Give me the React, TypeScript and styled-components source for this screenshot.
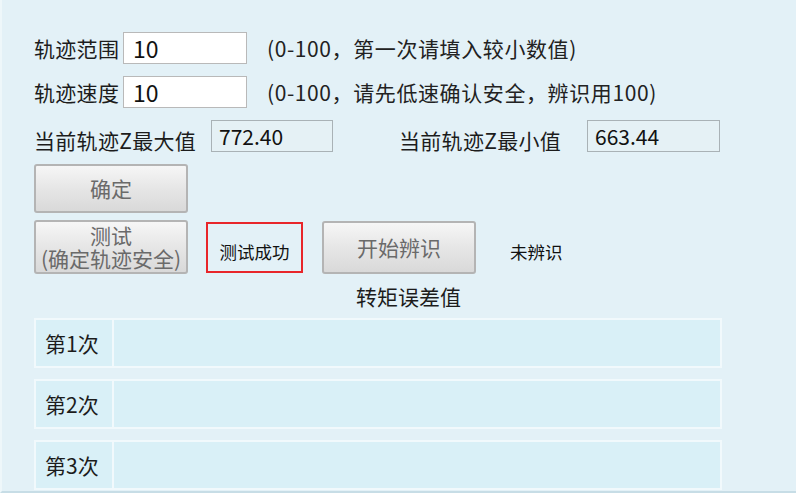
import { createGlobalStyle } from "styled-components";
import styled from "styled-components";

const GlobalStyle = createGlobalStyle`
  html, body {
    margin: 0;
    padding: 0;
    background: #e3f1f7;
  }
  * {
    box-sizing: border-box;
  }
`;

const FONT = `"Noto Sans CJK SC", "Noto Sans", "Liberation Sans", sans-serif`;

const Page = styled.div`
  width: 796px;
  height: 493px;
  background: #e3f1f7;
  border-left: 2px solid #eef7fa;
  border-bottom: 2px solid #c7dde6;
  padding: 32px 0 0 32px;
  font-family: ${FONT};
  color: #1c1c1c;
  display: flex;
  flex-direction: column;
`;

const Row = styled.div<{ top?: number; height?: number }>`
  display: flex;
  align-items: center;
  margin-top: ${({ top }) => top ?? 0}px;
  height: ${({ height }) => height ?? 32}px;
`;

const Label = styled.div<{ width?: number; size?: number; gap?: number; drop?: number }>`
  width: ${({ width }) => (width ? `${width}px` : "auto")};
  margin-left: ${({ gap }) => gap ?? 0}px;
  padding-top: ${({ drop }) => drop ?? 0}px;
  flex: 0 0 auto;
  font-size: ${({ size }) => size ?? 21}px;
  line-height: 1;
  white-space: nowrap;
  letter-spacing: 0.3px;
`;

const Input = styled.div<{ width?: number }>`
  width: ${({ width }) => width ?? 124}px;
  height: 32px;
  background: #ffffff;
  border: 1px solid #b9b9b9;
  padding-left: 9px;
  font-size: 23px;
  display: flex;
  align-items: center;
  color: #111;
`;

const Note = styled.div`
  margin-left: 20px;
  font-size: 21px;
  line-height: 1;
  white-space: nowrap;
  letter-spacing: 0.6px;
  color: #222;
`;

const ReadBox = styled.div<{ width: number }>`
  width: ${({ width }) => width}px;
  height: 32px;
  border: 1px solid #a9b2b6;
  background: #e5f1f5;
  padding-left: 7px;
  font-size: 21px;
  display: flex;
  align-items: center;
  color: #111;
`;

const Button = styled.button<{ width?: number; height?: number; gap?: number }>`
  width: ${({ width }) => width ?? 154}px;
  height: ${({ height }) => height ?? 49}px;
  margin-left: ${({ gap }) => gap ?? 0}px;
  flex: 0 0 auto;
  border: 2px solid #b4b4b4;
  border-radius: 3px;
  background: linear-gradient(#f6f6f6, #e6e6e6 50%, #d9d9d9);
  font-family: ${FONT};
  font-size: 21px;
  line-height: 23px;
  color: #6a6a6a;
  padding: 0;
  white-space: nowrap;
  display: flex;
  flex-direction: column;
  align-items: center;
  justify-content: center;
`;

const StatusBox = styled.div`
  width: 97px;
  height: 51px;
  margin-left: 18px;
  flex: 0 0 auto;
  border: 2px solid #e8262a;
  font-size: 17.5px;
  display: flex;
  align-items: center;
  justify-content: center;
  padding-top: 8px;
  color: #111;
  white-space: nowrap;
`;

const StatusText = styled.div`
  margin-left: 34px;
  font-size: 17.5px;
  padding-top: 8px;
  color: #111;
`;

const Caption = styled.div`
  margin: 10px 0 0 322px;
  font-size: 21px;
  line-height: 24px;
`;

const Table = styled.div`
  width: 688px;
  margin-top: 10px;
  display: flex;
  flex-direction: column;
  gap: 11px;
`;

const TableRow = styled.div`
  display: flex;
  height: 50px;
  border: 2px solid #f1f9fc;
  background: #f1f9fc;
  gap: 2px;
`;

const Cell = styled.div<{ width?: number }>`
  ${({ width }) => (width ? `width: ${width}px;` : "flex: 1;")}
  background: #d9f0f7;
  font-size: 21px;
  display: flex;
  align-items: center;
  padding-left: 9px;
  color: #1c1c1c;
`;

const rounds = ["第1次", "第2次", "第3次"];

const App = () => {
  return (
    <>
      <GlobalStyle />
      <Page>
        <Row>
          <Label width={89}>轨迹范围</Label>
          <Input>10</Input>
          <Note>(0-100，第一次请填入较小数值)</Note>
        </Row>
        <Row top={12}>
          <Label width={89}>轨迹速度</Label>
          <Input>10</Input>
          <Note>(0-100，请先低速确认安全，辨识用100)</Note>
        </Row>
        <Row top={12}>
          <Label width={177} drop={8}>
            当前轨迹Z最大值
          </Label>
          <ReadBox width={122}>772.40</ReadBox>
          <Label width={188} gap={66} drop={8}>
            当前轨迹Z最小值
          </Label>
          <ReadBox width={133}>663.44</ReadBox>
        </Row>
        <Row top={12} height={49}>
          <Button>确定</Button>
        </Row>
        <Row top={7} height={54}>
          <Button height={54}>
            <span>测试</span>
            <span>(确定轨迹安全)</span>
          </Button>
          <StatusBox>测试成功</StatusBox>
          <Button width={154} height={53} gap={19}>
            开始辨识
          </Button>
          <StatusText>未辨识</StatusText>
        </Row>
        <Caption>转矩误差值</Caption>
        <Table>
          {rounds.map((r) => (
            <TableRow key={r}>
              <Cell width={76}>{r}</Cell>
              <Cell />
            </TableRow>
          ))}
        </Table>
      </Page>
    </>
  );
};

export default App;
